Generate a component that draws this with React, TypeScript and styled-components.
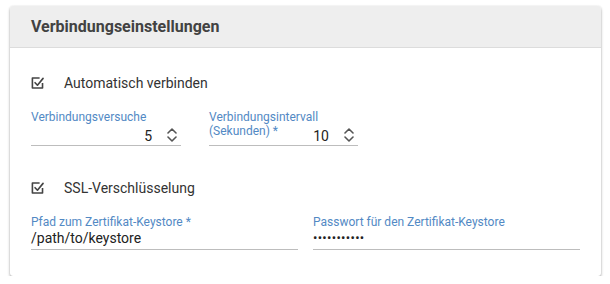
import React from "react";
import styled, { createGlobalStyle } from "styled-components";

const Global = createGlobalStyle`
  html, body { margin: 0; padding: 0; background: #ffffff; }
  body { font-family: Roboto, "Liberation Sans", Arial, sans-serif; }
  * { box-sizing: border-box; }
`;

const Page = styled.div`
  padding: 6px 9px 0 10px;
`;

const Card = styled.section`
  width: 591px;
  height: 270px;
  background: #fff;
  border-radius: 3px;
  box-shadow: 0 2px 3px rgba(0, 0, 0, 0.3), 0 0 2px rgba(0, 0, 0, 0.12);
  overflow: hidden;
  display: flex;
  flex-direction: column;
`;

const Header = styled.header`
  height: 42px;
  background: #eeeeee;
  border-bottom: 1px solid #dcdcdc;
  display: flex;
  align-items: center;
  padding: 0 21px;
`;

const Title = styled.h2`
  margin: 0;
  font-size: 16px;
  font-weight: 700;
  color: #424242;
`;

const Body = styled.div`
  padding: 23px 21px 0 21px;
  display: flex;
  flex-direction: column;
`;

const CheckRow = styled.label<{ $mt?: number }>`
  display: flex;
  align-items: center;
  height: 24px;
  margin-top: ${(p) => p.$mt ?? 0}px;
  gap: 19px;
  font-size: 14px;
  color: #333;
`;

const Row = styled.div<{ $mt: number; $gap: number }>`
  display: flex;
  gap: ${(p) => p.$gap}px;
  margin-top: ${(p) => p.$mt}px;
`;

const Field = styled.div<{ $w: number; $h: number }>`
  position: relative;
  width: ${(p) => p.$w}px;
  height: ${(p) => p.$h}px;
  border-bottom: 1px solid #bdbdbd;
  display: flex;
  align-items: flex-end;
`;

const FloatLabel = styled.span`
  position: absolute;
  left: 0;
  top: 0;
  font-size: 12px;
  line-height: 14px;
  color: #5289c4;
  max-width: 110px;
`;

const WideLabel = styled(FloatLabel)`
  max-width: none;
`;

const NumberValue = styled.span`
  flex: 1;
  text-align: right;
  font-size: 14px;
  line-height: 18px;
  color: #222;
  padding-right: 15px;
`;

const TextValue = styled.span`
  font-size: 14px;
  line-height: 18px;
  color: #222;
  padding-bottom: 2px;
`;

const Dots = styled.span`
  font-size: 13px;
  line-height: 18px;
  color: #222;
  padding-bottom: 2px;
  letter-spacing: 0.3px;
`;

const Spinner = styled.span`
  width: 10px;
  height: 16px;
  margin: 0 4px 2px 0;
  display: flex;
`;

const CheckIcon = () => (
  <svg width="14" height="14" viewBox="0 0 13 13" fill="none">
    <path d="M10.7 6.5 V11.2 H1.3 V1.8 H8" stroke="#444" strokeWidth="1.5" strokeLinejoin="round" />
    <path d="M3.8 6.2 L6 8.6 L11.2 2.2" stroke="#444" strokeWidth="1.5" strokeLinecap="round" strokeLinejoin="round" />
  </svg>
);

const SpinIcon = () => (
  <svg width="10" height="16" viewBox="0 0 10 16" fill="none">
    <path d="M1 6 L5 2 L9 6" stroke="#555" strokeWidth="1.6" strokeLinecap="round" strokeLinejoin="round" />
    <path d="M1 10 L5 14 L9 10" stroke="#555" strokeWidth="1.6" strokeLinecap="round" strokeLinejoin="round" />
  </svg>
);

export default function App() {
  return (
    <Page>
      <Global />
      <Card>
        <Header>
          <Title>Verbindungseinstellungen</Title>
        </Header>
        <Body>
          <CheckRow>
            <CheckIcon />
            <span>Automatisch verbinden</span>
          </CheckRow>
          <Row $mt={15} $gap={28}>
            <Field $w={150} $h={36}>
              <FloatLabel>Verbindungsversuche</FloatLabel>
              <NumberValue>5</NumberValue>
              <Spinner><SpinIcon /></Spinner>
            </Field>
            <Field $w={149} $h={36}>
              <FloatLabel>Verbindungsintervall (Sekunden) *</FloatLabel>
              <NumberValue>10</NumberValue>
              <Spinner><SpinIcon /></Spinner>
            </Field>
          </Row>
          <CheckRow $mt={30}>
            <CheckIcon />
            <span>SSL-Verschlüsselung</span>
          </CheckRow>
          <Row $mt={15} $gap={15}>
            <Field $w={267} $h={35}>
              <WideLabel>Pfad zum Zertifikat-Keystore *</WideLabel>
              <TextValue>/path/to/keystore</TextValue>
            </Field>
            <Field $w={267} $h={35}>
              <WideLabel>Passwort für den Zertifikat-Keystore</WideLabel>
              <Dots>•••••••••••</Dots>
            </Field>
          </Row>
        </Body>
      </Card>
    </Page>
  );
}
